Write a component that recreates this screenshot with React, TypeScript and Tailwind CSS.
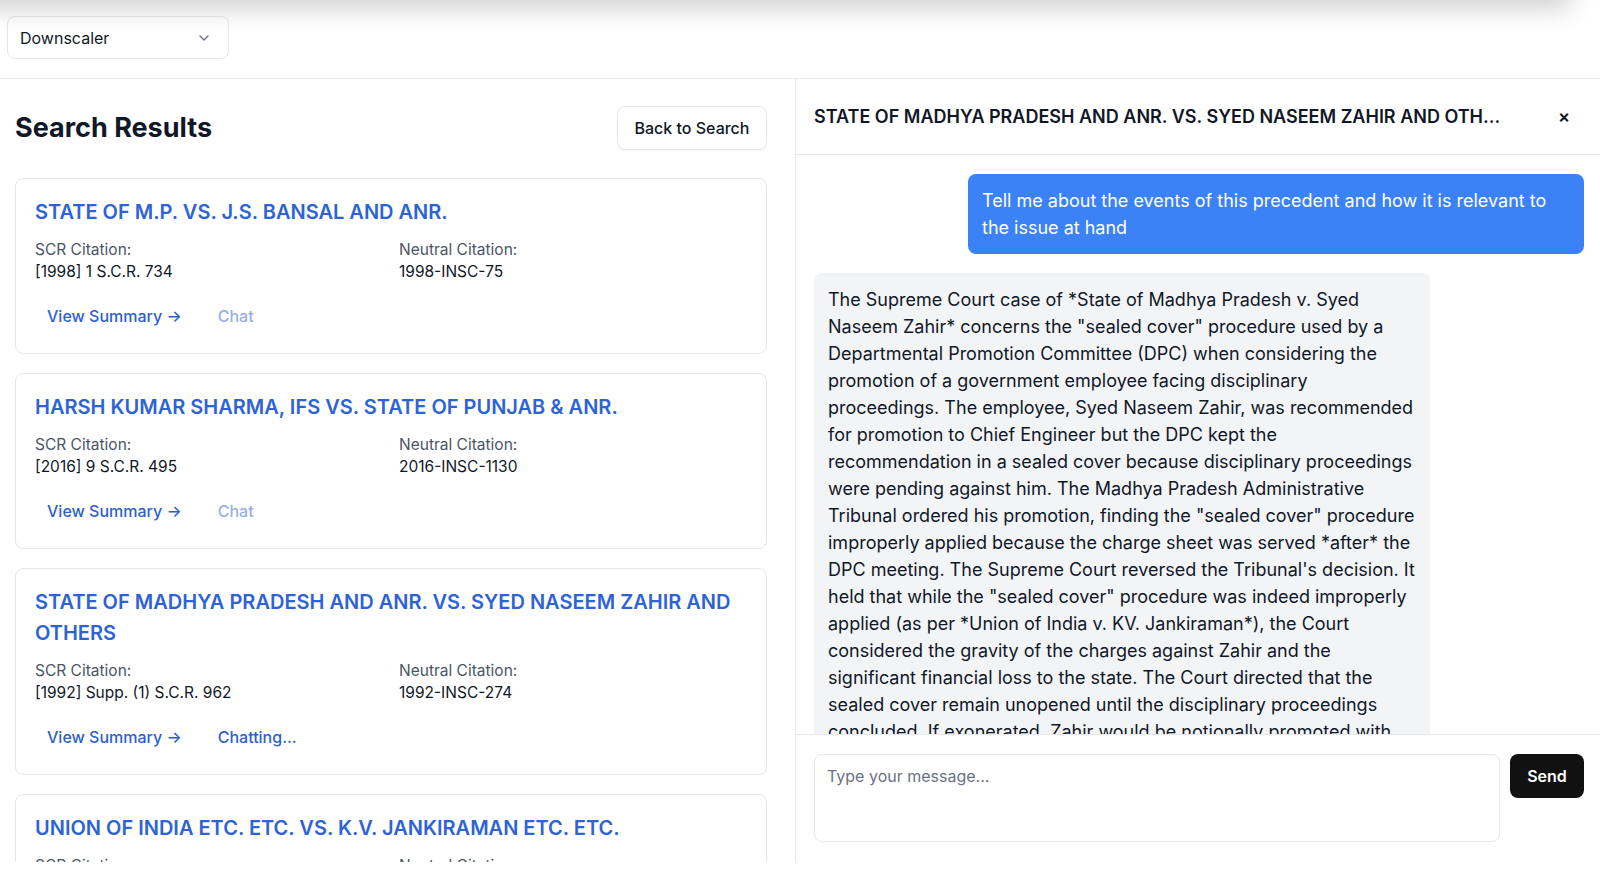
import React, { useState } from "react";
import { ChevronDown } from "lucide-react";

const results = [
  {
    title: "STATE OF M.P. VS. J.S. BANSAL AND ANR.",
    scr: "[1998] 1 S.C.R. 734",
    neutral: "1998-INSC-75",
    chatting: false,
  },
  {
    title: "HARSH KUMAR SHARMA, IFS VS. STATE OF PUNJAB & ANR.",
    scr: "[2016] 9 S.C.R. 495",
    neutral: "2016-INSC-1130",
    chatting: false,
  },
  {
    title: "STATE OF MADHYA PRADESH AND ANR. VS. SYED NASEEM ZAHIR AND OTHERS",
    scr: "[1992] Supp. (1) S.C.R. 962",
    neutral: "1992-INSC-274",
    chatting: true,
  },
  {
    title: "UNION OF INDIA ETC. ETC. VS. K.V. JANKIRAMAN ETC. ETC.",
    scr: "[1991] 3 S.C.R. 790",
    neutral: "1991-INSC-192",
    chatting: false,
  },
];

const answer =
  'The Supreme Court case of *State of Madhya Pradesh v. Syed Naseem Zahir* concerns the "sealed cover" procedure used by a Departmental Promotion Committee (DPC) when considering the promotion of a government employee facing disciplinary proceedings. The employee, Syed Naseem Zahir, was recommended for promotion to Chief Engineer but the DPC kept the recommendation in a sealed cover because disciplinary proceedings were pending against him. The Madhya Pradesh Administrative Tribunal ordered his promotion, finding the "sealed cover" procedure improperly applied because the charge sheet was served *after* the DPC meeting. The Supreme Court reversed the Tribunal\'s decision. It held that while the "sealed cover" procedure was indeed improperly applied (as per *Union of India v. KV. Jankiraman*), the Court considered the gravity of the charges against Zahir and the significant financial loss to the state. The Court directed that the sealed cover remain unopened until the disciplinary proceedings concluded. If exonerated, Zahir would be notionally promoted with effect from the date his junior was promoted, but without arrears of pay.';

function ResultCard({ item }: { item: (typeof results)[number] }) {
  return (
    <div className="rounded-lg border border-gray-200 bg-white px-[19px] pt-[18px] pb-[17px]">
      <h2 className="text-xl leading-[31px] font-semibold text-[#2d63d6]">{item.title}</h2>
      <div className="mt-[11px] grid grid-cols-2 gap-4 text-[15.5px] leading-[22px]">
        <div>
          <div className="text-gray-600">SCR Citation:</div>
          <div className="text-gray-900">{item.scr}</div>
        </div>
        <div>
          <div className="text-gray-600">Neutral Citation:</div>
          <div className="text-gray-900">{item.neutral}</div>
        </div>
      </div>
      <div className="mt-[13px] flex gap-3">
        <button className="px-3 py-2 text-base leading-6 font-medium text-[#2d5fcf]">
          View Summary →
        </button>
        {item.chatting ? (
          <button className="px-3 py-2 text-base leading-6 font-medium text-[#2d5fcf]">
            Chatting...
          </button>
        ) : (
          <button className="px-3 py-2 text-base leading-6 font-medium text-[#2d5fcf] opacity-50">
            Chat
          </button>
        )}
      </div>
    </div>
  );
}

export default function App() {
  const [message, setMessage] = useState("");

  return (
    <div className="h-[862px] overflow-hidden bg-white font-['Inter',sans-serif] text-gray-900">
      <div className="relative h-[79px] border-b border-gray-200 px-[7px] pt-4">
        <div className="pointer-events-none absolute -top-10 -left-10 right-[30px] h-10 bg-white shadow-[0_6px_28px_rgba(0,0,0,0.22)]" />
        <button className="flex h-[43px] w-[222px] items-center justify-between rounded-lg border border-gray-200 bg-white pr-4 pl-3 text-base">
          <span>Downscaler</span>
          <ChevronDown size={16} className="text-gray-500" />
        </button>
      </div>

      <div className="flex h-[783px]">
        <div className="w-[796px] shrink-0 overflow-hidden border-r border-gray-200 pt-[27px] pr-[28px] pl-[15px]">
          <div className="flex items-center justify-between">
            <h1 className="text-[27px] font-bold">Search Results</h1>
            <button className="h-[44px] w-[150px] rounded-lg border border-gray-200 bg-white text-base font-medium shadow-xs">
              Back to Search
            </button>
          </div>
          <div className="mt-[28px] flex flex-col gap-[19px]">
            {results.map((item, index) => (
              <ResultCard key={index} item={item} />
            ))}
          </div>
        </div>

        <div className="flex min-w-0 flex-1 flex-col">
          <div className="flex h-[76px] shrink-0 items-center justify-between border-b border-gray-200 pr-4 pl-[18px]">
            <h3 className="text-lg font-semibold">
              STATE OF MADHYA PRADESH AND ANR. VS. SYED NASEEM ZAHIR AND OTH...
            </h3>
            <button className="flex h-10 w-10 items-center justify-center text-lg leading-none font-semibold">
              ×
            </button>
          </div>

          <div className="flex h-[580px] shrink-0 flex-col gap-[19px] overflow-hidden border-b border-gray-200 pt-[19px] pr-4 pl-[18px]">
            <div className="flex justify-end">
              <div className="max-w-[80%] rounded-lg bg-[#3b82f6] px-[14px] py-[13px] text-lg leading-[27px] text-white">
                Tell me about the events of this precedent and how it is relevant to the issue at hand
              </div>
            </div>
            <div className="flex justify-start">
              <div className="max-w-[80%] rounded-lg bg-gray-100 px-[14px] py-[13px] text-lg leading-[27px] text-gray-900">
                {answer}
              </div>
            </div>
          </div>

          <div className="flex gap-[10px] pt-[19px] pr-4 pl-[18px]">
            <textarea
              value={message}
              onChange={(e) => setMessage(e.target.value)}
              placeholder="Type your message..."
              className="h-[88px] flex-1 resize-none rounded-lg border border-gray-200 px-3 py-[9px] text-base placeholder:text-gray-500 focus:outline-none"
            />
            <button className="h-[44px] w-[74px] rounded-lg bg-[#111111] text-base font-semibold text-white">
              Send
            </button>
          </div>
        </div>
      </div>
    </div>
  );
}
